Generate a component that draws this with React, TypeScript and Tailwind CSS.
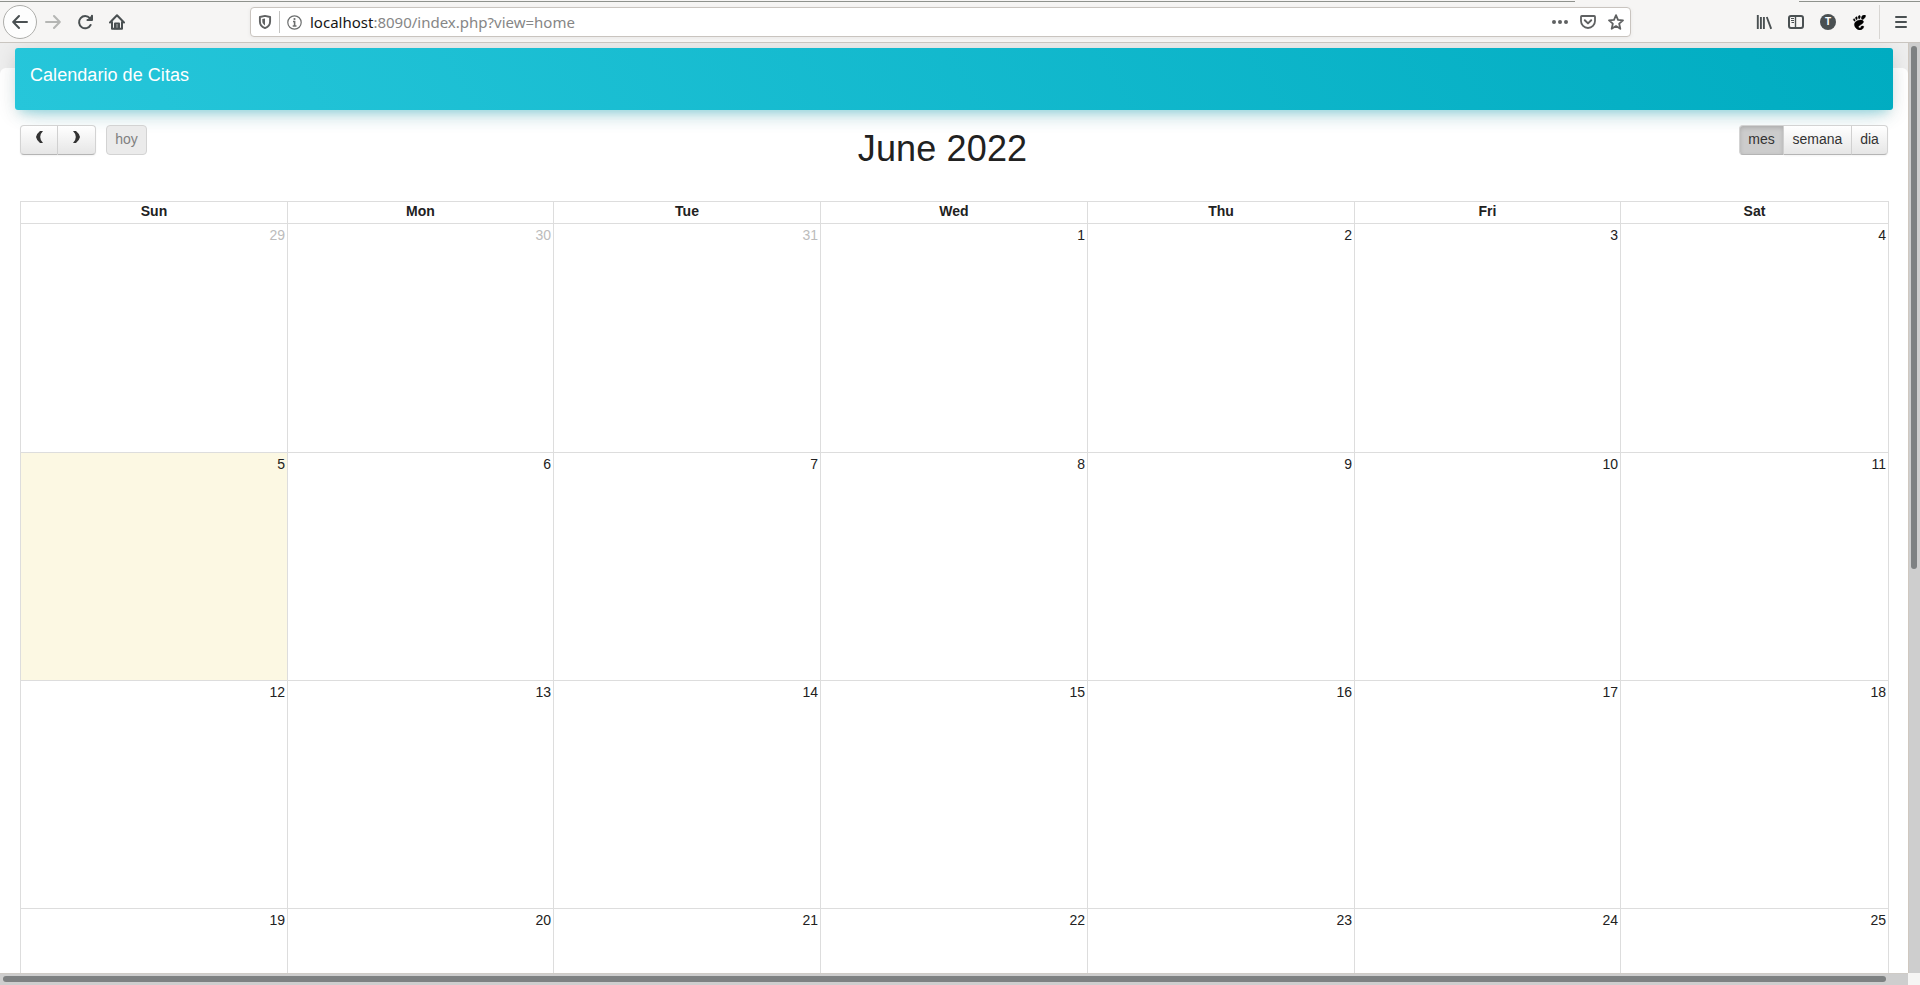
import React from "react";
import { SiGnome } from "react-icons/si";

const weekDays = ["Sun", "Mon", "Tue", "Wed", "Thu", "Fri", "Sat"];
const weeks = [
  [29, 30, 31, 1, 2, 3, 4],
  [5, 6, 7, 8, 9, 10, 11],
  [12, 13, 14, 15, 16, 17, 18],
  [19, 20, 21, 22, 23, 24, 25],
];

const columns = "grid grid-cols-[267px_266px_267px_267px_267px_266px_268px]";
const button =
  "flex h-[30px] items-start justify-center border border-[#d3d3d3] border-b-[#b4b4b4] pt-[5px] text-[14px] leading-[17px]";
const raised = "bg-linear-to-b from-white to-[#e6e6e6] text-[#333] shadow-[0_1px_2px_rgba(0,0,0,0.05)]";

function Toolbar() {
  return (
    <header className="flex h-[43px] shrink-0 flex-col border-b border-[#c9c5c0] bg-[#f6f5f4]">
      <div className="flex h-[2px] shrink-0 items-end justify-between">
        <div className="h-px w-[1575px] bg-[#8f928d]" />
        <div className="h-px w-[121px] bg-[#8f928d]" />
      </div>
      <div className="flex h-10 items-center">
        <div className="ml-[3px] flex size-[34px] shrink-0 items-center justify-center rounded-full border border-[#aeaeab] bg-[#fdfdfd]">
          <svg className="size-4" viewBox="0 0 16 16" fill="none" stroke="#4a5052" strokeWidth="2" strokeLinecap="round" strokeLinejoin="round">
            <path d="M15 8H1.3M7 2L1.2 8L7 14" />
          </svg>
        </div>
        <svg className="ml-2 size-4 shrink-0" viewBox="0 0 16 16" fill="none" stroke="#b5b6b4" strokeWidth="2" strokeLinecap="round" strokeLinejoin="round">
          <path d="M1 8H14.7M9 2L14.8 8L9 14" />
        </svg>
        <svg className="ml-4 size-4 shrink-0" viewBox="0 0 16 16" fill="none" stroke="#4a5052" strokeWidth="2" strokeLinecap="round" strokeLinejoin="round">
          <path d="M13.6 11A6.1 6.1 0 1 1 12.8 4.2" />
          <path d="M9.5 6.5H15V1Z" fill="#4a5052" stroke="none" />
          <path d="M15 1.8V6H10.5" />
        </svg>
        <svg className="ml-4 size-4 shrink-0" viewBox="0 0 16 16" fill="none" stroke="#4a5052" strokeWidth="2" strokeLinecap="round" strokeLinejoin="round">
          <path d="M1 8.5L8 1.3L15 8.5M3 7.5V14.7H13V7.5" />
          <path d="M6 14.5V9.5H10V14.5" />
          <path d="M8 11V15" stroke="#4a5052" strokeWidth="1.4" />
        </svg>
        <div className="ml-[125px] flex h-[30px] w-[1381px] items-center rounded-[4px] border border-[#c9c4bf] bg-white shadow-[0_1px_4px_rgba(0,0,0,0.06)]">
          <svg className="ml-[6px] size-4 shrink-0" viewBox="0 0 16 16" fill="none" stroke="#5f6162">
            <path d="M8 1.9L13.1 3V7.5C13.1 10.5 11 13 8 14.1C5 13 2.9 10.5 2.9 7.5V3Z" strokeWidth="1.9" strokeLinejoin="round" />
            <path d="M8 4.5V11.5C6.2 10.4 5.3 9 5.3 7V5Z" fill="#5f6162" stroke="none" />
          </svg>
          <div className="ml-[6px] h-[22px] w-px bg-[#c4c4c2]" />
          <svg className="ml-[7px] size-[15px] shrink-0" viewBox="0 0 15 15" fill="none" stroke="#6b6d6d">
            <circle cx="7.5" cy="7.5" r="6.7" strokeWidth="1.2" />
            <path d="M6 6.5H7.6V11M5.7 11H9.5" strokeWidth="1.6" />
            <circle cx="7.5" cy="4" r="1.1" fill="#6b6d6d" stroke="none" />
          </svg>
          <span className="ml-2 whitespace-pre font-['Noto_Sans',sans-serif] text-[15px] leading-5 text-[#868686]">
            <span className="text-[#161616]">localhost</span>:8090/index.php?view=home
          </span>
          <svg className="ml-auto mr-[11px] h-4 w-[17px] shrink-0" viewBox="0 0 17 16" fill="#5f6162">
            <circle cx="2" cy="8" r="2" />
            <circle cx="8" cy="8" r="2" />
            <circle cx="14" cy="8" r="2" />
          </svg>
          <svg className="mr-3 size-4 shrink-0" viewBox="0 0 16 16" fill="none" stroke="#5f6162" strokeLinecap="round" strokeLinejoin="round">
            <path d="M1.8 2H14.2Q15 2 15 2.8V7A7 7 0 0 1 1 7V2.8Q1 2 1.8 2Z" strokeWidth="1.8" />
            <path d="M4.8 6.3L8 9.4L11.2 6.3" strokeWidth="2" />
          </svg>
          <svg className="mr-[6px] size-4 shrink-0" viewBox="0 0 16 16" fill="none" stroke="#5f6162" strokeWidth="1.8" strokeLinejoin="round">
            <path d="M8 1.2L10 5.8L15 6.3L11.2 9.7L12.3 14.8L8 12.1L3.7 14.8L4.8 9.7L1 6.3L6 5.8Z" />
          </svg>
        </div>
        <svg className="ml-[125px] size-4 shrink-0" viewBox="0 0 16 16" fill="none" stroke="#4a5052">
          <path d="M1.8 1V15M4.9 3V15M7.9 3V15" strokeWidth="1.9" />
          <path d="M10.8 3L15.2 14.8" strokeWidth="1.9" />
        </svg>
        <svg className="ml-4 size-4 shrink-0" viewBox="0 0 16 16" fill="none" stroke="#4a5052">
          <rect x="1" y="2" width="14" height="12" rx="2" strokeWidth="2" />
          <path d="M7.5 2V14" strokeWidth="1.4" />
          <path d="M3 4.5H6M3 6.5H6M3.5 8.5H6" strokeWidth="1" />
        </svg>
        <div className="ml-4 flex size-4 shrink-0 items-center justify-center rounded-full bg-[#4a5052] font-['Liberation_Sans',sans-serif] text-[10px] font-bold leading-none text-white">
          T
        </div>
        <SiGnome className="ml-4 size-[15px] shrink-0 stroke-black stroke-[0.7] text-black" />
        <div className="ml-3 h-[34px] w-px bg-[#d8d6d3]" />
        <div className="ml-[15px] flex w-3 flex-col gap-[3px]">
          <div className="h-[2px] rounded bg-[#4a5052]" />
          <div className="h-[2px] rounded bg-[#4a5052]" />
          <div className="h-[2px] rounded bg-[#4a5052]" />
        </div>
      </div>
    </header>
  );
}

function Chevron({ d }: { d: string }) {
  return (
    <svg className="h-3 w-[7px]" viewBox="0 0 7 12" fill="#333">
      <path d={d} />
    </svg>
  );
}

function CalendarControls() {
  return (
    <div className="flex h-[76px] items-start justify-between">
      <div className="flex w-[416px]">
        <div className={`${button} ${raised} w-[38px] rounded-l-[4px]`}>
          <Chevron d="M4 0H7Q4.2 2.8 4.2 6Q4.2 9.2 7 12H4Q0.6 9.3 0 6Q0.6 2.7 4 0Z" />
        </div>
        <div className={`${button} ${raised} w-[38px] rounded-r-[4px] border-l-0`}>
          <Chevron d="M3 0H0Q2.8 2.8 2.8 6Q2.8 9.2 0 12H3Q6.4 9.3 7 6Q6.4 2.7 3 0Z" />
        </div>
        <div className={`${button} ml-[10px] w-[41px] rounded-[4px] border-b-[#d3d3d3] bg-[#ebebeb] text-[#808080]`}>hoy</div>
      </div>
      <h2 className="pt-1 text-[36px] font-normal leading-10 tracking-[0.15px] text-[#212121]">June 2022</h2>
      <div className="flex w-[440px] justify-end pr-px">
        <div className={`${button} w-[45px] rounded-l-[4px] border-[#b0b0b0] bg-[#ccc] text-[#333] shadow-[inset_0_2px_4px_rgba(0,0,0,0.15)]`}>mes</div>
        <div className={`${button} ${raised} w-[68px] border-l-0`}>semana</div>
        <div className={`${button} ${raised} w-9 rounded-r-[4px] border-l-0`}>dia</div>
      </div>
    </div>
  );
}

function Calendar() {
  return (
    <div className="w-[1869px] border-r border-[#ddd] text-[14px] leading-4 text-[#212121]">
      <div className={`${columns} h-[22px] border-t border-[#ddd]`}>
        {weekDays.map((day) => (
          <div key={day} className="border-l border-[#ddd] pt-px text-center font-bold">
            {day}
          </div>
        ))}
      </div>
      {weeks.map((week, row) => (
        <div key={row} className={`${columns} ${row === 0 ? "h-[229px]" : "h-[228px]"} border-t border-[#ddd]`}>
          {week.map((day, col) => (
            <div
              key={day}
              className={`border-l border-[#ddd] pr-[2px] pt-[3px] text-right ${day === 5 ? "bg-[#fcf8e3]" : ""} ${row === 0 && col < 3 ? "text-[#bcbcbc]" : ""}`}
            >
              {day}
            </div>
          ))}
        </div>
      ))}
    </div>
  );
}

export default function App() {
  return (
    <div className="flex h-[985px] w-[1920px] flex-col overflow-hidden font-['Liberation_Sans',Arial,sans-serif]">
      <Toolbar />
      <div className="flex h-[930px] shrink-0">
        <main className="h-[930px] w-[1908px] overflow-hidden bg-[#eee] pt-[25px]">
          <section className="h-[905px] rounded-t-[6px] bg-white">
            <div className="flex flex-col px-[15px]">
              <div className="-mt-5 h-[62px] rounded-[3px] bg-[linear-gradient(60deg,#26c6da,#00acc1)] pl-[15px] pt-[15px] text-[18px] leading-[25px] tracking-[0.05px] text-white shadow-[0_12px_20px_-10px_rgba(0,188,212,0.28),0_4px_20px_rgba(0,0,0,0.12),0_7px_8px_-5px_rgba(0,188,212,0.2)]">
                Calendario de Citas
              </div>
              <div className="flex w-[1874px] flex-col pl-[5px] pt-[15px]">
                <CalendarControls />
                <Calendar />
              </div>
            </div>
          </section>
        </main>
        <div className="w-3 border-l border-[#cfc8c0] bg-[#cecece] pl-[2px] pt-[3px]">
          <div className="h-[523px] w-[6px] rounded-full bg-[#7e8182]" />
        </div>
      </div>
      <div className="flex h-3 shrink-0">
        <div className="w-[1908px] border-t border-[#cfcbc6] bg-[#cecece] pl-[3px] pt-[2px]">
          <div className="h-[6px] w-[1883px] rounded-full bg-[#7e8182]" />
        </div>
        <div className="w-3 bg-[#f6f5f4]" />
      </div>
    </div>
  );
}
